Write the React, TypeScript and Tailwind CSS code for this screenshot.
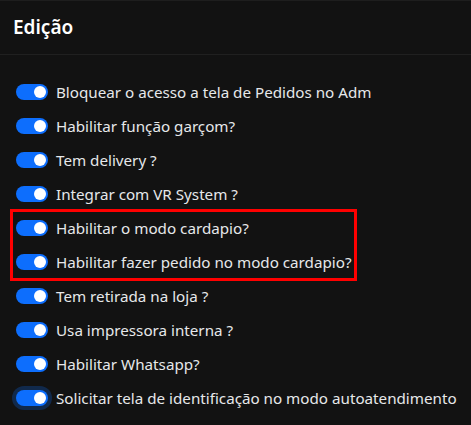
import React from "react";

type Option = { label: string; focused?: boolean };

const before: Option[] = [
  { label: "Bloquear o acesso a tela de Pedidos no Adm" },
  { label: "Habilitar função garçom?" },
  { label: "Tem delivery ?" },
  { label: "Integrar com VR System ?" },
];

const highlighted: Option[] = [
  { label: "Habilitar o modo cardapio?" },
  { label: "Habilitar fazer pedido no modo cardapio?" },
];

const after: Option[] = [
  { label: "Tem retirada na loja ?" },
  { label: "Usa impressora interna ?" },
  { label: "Habilitar Whatsapp?" },
  { label: "Solicitar tela de identificação no modo autoatendimento", focused: true },
];

function Switch({ focused }: { focused?: boolean }) {
  return (
    <span
      className={
        "relative inline-block h-4 w-8 shrink-0 rounded-full bg-[#0d6efd] " +
        (focused ? "shadow-[0_0_0_4px_rgba(13,110,253,0.25)]" : "")
      }
    >
      <span className="absolute right-[2px] top-[2px] h-3 w-3 rounded-full bg-white" />
    </span>
  );
}

function Row({ option }: { option: Option }) {
  return (
    <label className="flex h-[34px] items-center gap-2">
      <Switch focused={option.focused} />
      <span className="whitespace-nowrap text-[15.2px] leading-6 text-[#e6e8ea]">{option.label}</span>
    </label>
  );
}

export default function App() {
  return (
    <div
      className="h-[425px] w-[471px] overflow-hidden bg-[#121212]"
      style={{ fontFamily: '"Noto Sans", "Open Sans", sans-serif' }}
    >
      <div className="flex h-[55px] items-center border-b border-t border-b-[#202020] border-t-[#1e1e1e] px-[13px]">
        <h2 className="text-[19px] font-semibold text-white">Edição</h2>
      </div>
      <div className="px-4 pt-[20px]">
        {before.map((o) => (
          <Row key={o.label} option={o} />
        ))}
        <div className="relative">
          {highlighted.map((o) => (
            <Row key={o.label} option={o} />
          ))}
          <div className="pointer-events-none absolute -bottom-[2px] -left-[6px] -top-[2px] w-[347px] border-[3px] border-[#ff0000]" />
        </div>
        {after.map((o) => (
          <Row key={o.label} option={o} />
        ))}
      </div>
    </div>
  );
}
